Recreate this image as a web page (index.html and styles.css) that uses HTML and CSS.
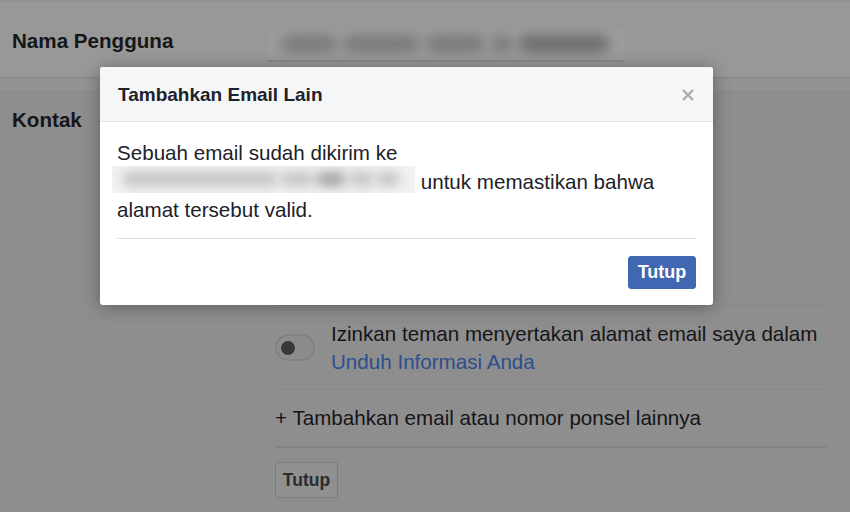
FILE: index.html
```html
<!DOCTYPE html>
<html lang="id">
<head>
<meta charset="utf-8">
<title>Tambahkan Email Lain</title>
<link rel="stylesheet" href="styles.css">
</head>
<body>
<div class="page">
  <div class="topline"></div>
  <div class="row-name">
    <div class="label">Nama Pengguna</div>
    <div class="blur-input">
      <span class="blob b-in" style="width:56px"></span>
      <span class="blob b-in" style="width:76px"></span>
      <span class="blob b-in" style="width:60px"></span>
      <span class="blob b-in" style="width:22px"></span>
      <span class="blob b-in b-dark" style="width:90px"></span>
    </div>
  </div>
  <div class="band"></div>
  <div class="row-contact">
    <div class="label label-contact">Kontak</div>
    <div class="contact-col">
      <div class="hidden-space"></div>
      <div class="toggle-row">
        <div class="toggle"><span class="knob"></span></div>
        <div class="toggle-text">
          <div>Izinkan teman menyertakan alamat email saya dalam</div>
          <a class="link" href="#">Unduh Informasi Anda</a>
        </div>
      </div>
      <div class="add-row">+ Tambahkan email atau nomor ponsel lainnya</div>
      <div class="btn-row"><button class="btn-gray">Tutup</button></div>
    </div>
  </div>
</div>

<div class="dialog">
  <div class="dialog-header">
    <span class="dialog-title">Tambahkan Email Lain</span>
    <svg class="close" width="12" height="12" viewBox="0 0 12 12"><path d="M1 1L11 11M11 1L1 11" stroke="#a9abaf" stroke-width="2.4" stroke-linecap="butt"/></svg>
  </div>
  <div class="dialog-body">
    <p class="msg">Sebuah email sudah dikirim ke<br><span class="blur-email"><span class="blob b-em" style="width:156px"></span><span class="blob b-em" style="width:34px"></span><span class="blob b-em b-emdark" style="width:30px"></span><span class="blob b-em" style="width:26px"></span><span class="blob b-em" style="width:24px"></span></span> untuk memastikan bahwa alamat tersebut valid.</p>
    <div class="divider"></div>
    <div class="dialog-footer"><button class="btn-blue">Tutup</button></div>
  </div>
</div>
</body>
</html>
```

FILE: styles.css
```css
html, body {
  margin: 0;
  padding: 0;
}
body {
  width: 850px;
  height: 512px;
  overflow: hidden;
  background: #8e8e8e;
  font-family: "Liberation Sans", Arial, sans-serif;
  color: #151618;
  position: relative;
}
.page {
  display: flex;
  flex-direction: column;
}
.topline {
  height: 2px;
  background: #939393;
}
.row-name {
  height: 77px;
  background: #989898;
  border-bottom: 2px solid #8b8b8b;
  display: flex;
  align-items: flex-start;
  box-sizing: border-box;
}
.label {
  font-weight: bold;
  font-size: 20.6px;
  line-height: 24px;
  padding-left: 12px;
  width: 267px;
  flex: none;
  box-sizing: border-box;
}
.row-name .label {
  padding-top: 27px;
}
.blur-input {
  margin-top: 25px;
  width: 358px;
  height: 35px;
  background: #9b9b9b;
  border-bottom: 2px solid #8a8a8a;
  box-sizing: border-box;
  overflow: hidden;
  display: flex;
  align-items: center;
  gap: 6px;
  padding-left: 14px;
}
.blob {
  display: inline-block;
  flex: none;
  border-radius: 9px;
}
.b-in {
  height: 18px;
  background: #7c7c7c;
  filter: blur(6px);
}
.b-dark {
  background: #6f6f6f;
}
.band {
  height: 11px;
  background: #939393;
}
.row-contact {
  display: flex;
  align-items: flex-start;
}
.label-contact {
  padding-top: 18px;
  width: 275px;
}
.contact-col {
  width: 551px;
  display: flex;
  flex-direction: column;
}
.hidden-space {
  height: 215px;
  border-bottom: 1px solid #868686;
}
.toggle-row {
  height: 84px;
  border-bottom: 1px solid #888888;
  display: flex;
  align-items: flex-start;
  gap: 16px;
  padding-top: 14px;
  box-sizing: border-box;
}
.toggle {
  margin-top: 14px;
  width: 40px;
  height: 27px;
  border-radius: 14px;
  background: #8c8c8c;
  border: 2px solid #828282;
  box-sizing: border-box;
  display: flex;
  align-items: center;
  padding-left: 4px;
}
.knob {
  width: 14px;
  height: 14px;
  border-radius: 50%;
  background: #36383c;
}
.toggle-text {
  font-size: 20.6px;
  line-height: 28px;
  color: #141518;
}
.link {
  color: #2c4f8e;
  text-decoration: none;
}
.add-row {
  height: 58px;
  border-bottom: 2px solid #838383;
  box-sizing: border-box;
  font-size: 20.6px;
  line-height: 28px;
  padding-top: 14px;
  color: #141518;
}
.btn-row {
  padding-top: 14px;
}
.btn-gray {
  font-family: "Liberation Sans", Arial, sans-serif;
  font-weight: bold;
  font-size: 17.5px;
  color: #2a2b2e;
  background: #909090;
  border: 1px solid #7c7c7c;
  border-radius: 2px;
  height: 36px;
  width: 63px;
  padding: 0;
}

/* dialog overlay */
.dialog {
  position: absolute;
  left: 100px;
  top: 67px;
  width: 613px;
  height: 238px;
  background: #ffffff;
  border-radius: 3px;
  box-shadow: 0 2px 18px rgba(0, 0, 0, 0.35);
  overflow: hidden;
}
.dialog-header {
  height: 54px;
  background: #f5f6f7;
  border-bottom: 1px solid #e5e5e5;
  display: flex;
  align-items: center;
  justify-content: space-between;
  padding: 0 19px 0 18px;
}
.dialog-title {
  font-weight: bold;
  font-size: 19px;
  line-height: 54px;
  color: #1d2129;
  padding-top: 1px;
}
.close {
  display: block;
  margin-top: 1px;
}
.dialog-body {
  padding: 17px 17px 0 17px;
}
.msg {
  margin: 0;
  font-size: 20.6px;
  line-height: 28.5px;
  color: #1d2129;
  padding-bottom: 13px;
}
.blur-email {
  display: inline-flex;
  align-items: center;
  gap: 2px;
  vertical-align: top;
  width: 303px;
  height: 27px;
  margin-left: -5px;
  margin-top: -2px;
  padding-left: 10px;
  box-sizing: border-box;
  background: #f2f2f2;
  overflow: hidden;
}
.b-em {
  height: 14px;
  background: #c2c2c2;
  filter: blur(6px);
}
.b-emdark {
  background: #9e9e9e;
}
.divider {
  height: 1px;
  background: #dddfe2;
}
.dialog-footer {
  display: flex;
  justify-content: flex-end;
  padding-top: 17px;
}
.btn-blue {
  font-family: "Liberation Sans", Arial, sans-serif;
  font-weight: bold;
  font-size: 18px;
  color: #ffffff;
  background: #4267b2;
  border: 1px solid #4267b2;
  border-radius: 3px;
  height: 33px;
  width: 68px;
  padding: 0;
}
```
